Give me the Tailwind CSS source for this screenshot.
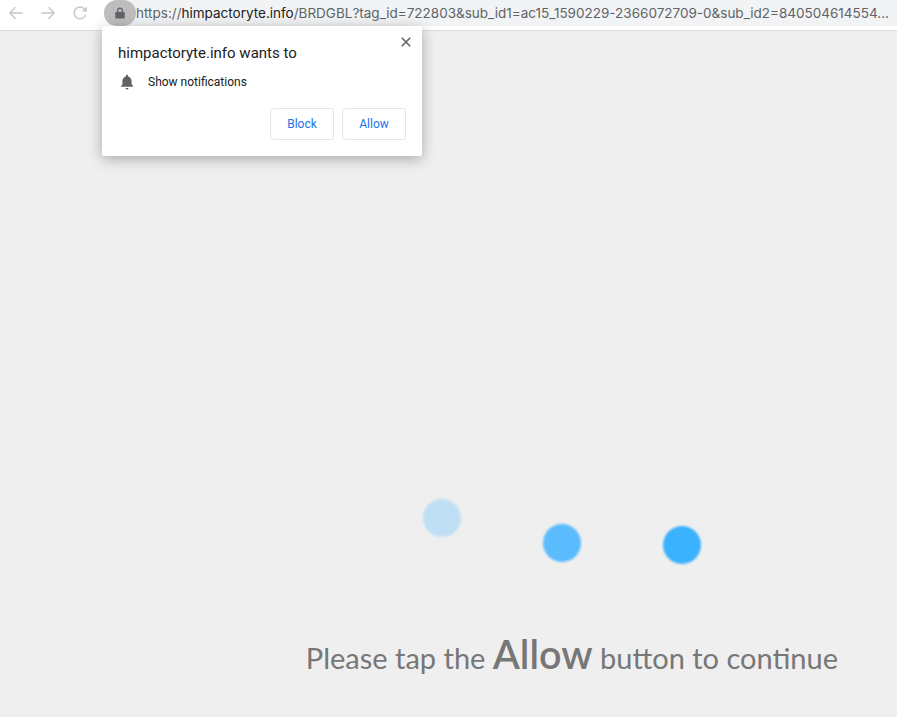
<!doctype html>
<html>
<head>
<meta charset="utf-8">
<script src="https://cdn.jsdelivr.net/npm/@tailwindcss/browser@4"></script>
</head>
<body class="w-[897px] h-[717px] overflow-hidden bg-[#efefef] font-['Liberation_Sans',sans-serif]">
<div class="relative flex flex-col h-[717px]">
  <header class="h-[31px] bg-white border-b border-[#dcdcdc] flex items-start shrink-0">
    <nav class="w-[104px] h-[26px] flex items-center shrink-0">
      <svg class="ml-[8px]" width="16" height="16" viewBox="0 0 16 16" fill="none" stroke="#c4c6c9" stroke-width="1.3"><path d="M14.5 8H2M7.5 2.3 1.8 8l5.7 5.7"/></svg>
      <svg class="ml-[16px]" width="16" height="16" viewBox="0 0 16 16" fill="none" stroke="#c4c6c9" stroke-width="1.3"><path d="M1.5 8H14M8.5 2.3 14.2 8l-5.700 5.700"/></svg>
      <svg class="ml-[16px]" width="16" height="16" viewBox="0 0 16 16" fill="none" stroke="#c4c6c9" stroke-width="1.5"><path d="M13.6 9.800A5.900 5.900 0 1 1 12.300 3.800L14.300 5.800"/><path d="M14.800 1.500v4.900H9.900" fill="#c4c6c9" stroke="none"/></svg>
    </nav>
    <div class="flex-1 min-w-0 h-[26px] bg-[#f1f3f4] flex items-center rounded-l-full">
      <span class="w-[32px] h-[26px] rounded-full bg-[#bdbdbd] flex items-center justify-center shrink-0">
        <svg width="12" height="12" viewBox="0 0 12 12"><path fill="#5f6368" d="M2 5h8a.7.7 0 0 1 .7.7v5a.7.7 0 0 1-.7.7H2a.7.7 0 0 1-.7-.7v-5A.7.7 0 0 1 2 5Z"/><path fill="none" stroke="#5f6368" stroke-width="1.3" d="M3.700 5.200V3.500a2.300 2.300 0 0 1 4.600 0v1.700"/></svg>
      </span>
      <p class="text-[13.5px] leading-[26px] text-[#5f6368] whitespace-nowrap font-['Inter',sans-serif]">https://<span class="text-[#202124]">himpactoryte.info</span>/BRDGBL?tag_id=722803&amp;sub_id1=ac15_1590229-2366072709-0&amp;sub_id2=840504614554...</p>
    </div>
  </header>

  <section class="absolute left-[102px] top-[26px] w-[320px] h-[130px] bg-white rounded-[2px] shadow-[0_3px_14px_rgba(0,0,0,0.3)] px-[16px] font-['Roboto',sans-serif]">
    <h1 class="mt-[17px] text-[15px] leading-[20px] text-[#202124]">himpactoryte.info wants to</h1>
    <svg class="absolute right-[10px] top-[10px]" width="12" height="12" viewBox="0 0 12 12" stroke="#5f6368" stroke-width="1.6"><path d="M1.800 1.800l8.400 8.400M10.200 1.800l-8.400 8.400"/></svg>
    <div class="flex items-center mt-[9px] h-[20px]">
      <svg class="ml-[2px]" width="14" height="16" viewBox="0 0 14 16"><path fill="#5f6368" d="M7 .8c.6 0 1 .4 1 1v.6c2.200.5 3.600 2.300 3.600 4.600v3.200l1.500 1.700v.8H.9V12.200l1.500-1.700V7c0-2.300 1.400-4.100 3.600-4.600v-.6c0-.6.4-1 1-1ZM5.500 14h3a1.500 1.500 0 0 1-3 0Z"/></svg>
      <span class="ml-[14px] text-[12px] text-[#202124]">Show notifications</span>
    </div>
    <div class="flex justify-end gap-[8px] mt-[16px]">
      <button class="w-[64px] h-[32px] rounded-[3px] border border-[#e6e6e6] bg-white text-[12px] text-[#1a73e8]">Block</button>
      <button class="w-[64px] h-[32px] rounded-[3px] border border-[#e6e6e6] bg-white text-[12px] text-[#1a73e8]">Allow</button>
    </div>
  </section>

  <main class="flex-1 flex flex-col justify-end">
    <p class="mb-[37px] mr-[59px] text-right whitespace-nowrap text-[#777777] text-[29px] leading-[44px] font-['Lato',sans-serif]">Please tap the <span class="text-[39.5px] font-semibold">Allow</span> button to continue</p>
  </main>

  <span class="absolute left-[423px] top-[499px] w-[38px] h-[38px] rounded-full bg-[#bfdff5] blur-[1px]"></span>
  <span class="absolute left-[543px] top-[524px] w-[38px] h-[38px] rounded-full bg-[#5abbfd] blur-[1px]"></span>
  <span class="absolute left-[663px] top-[526px] w-[38px] h-[38px] rounded-full bg-[#3bb2fe] blur-[1px]"></span>
</div>
</body>
</html>
